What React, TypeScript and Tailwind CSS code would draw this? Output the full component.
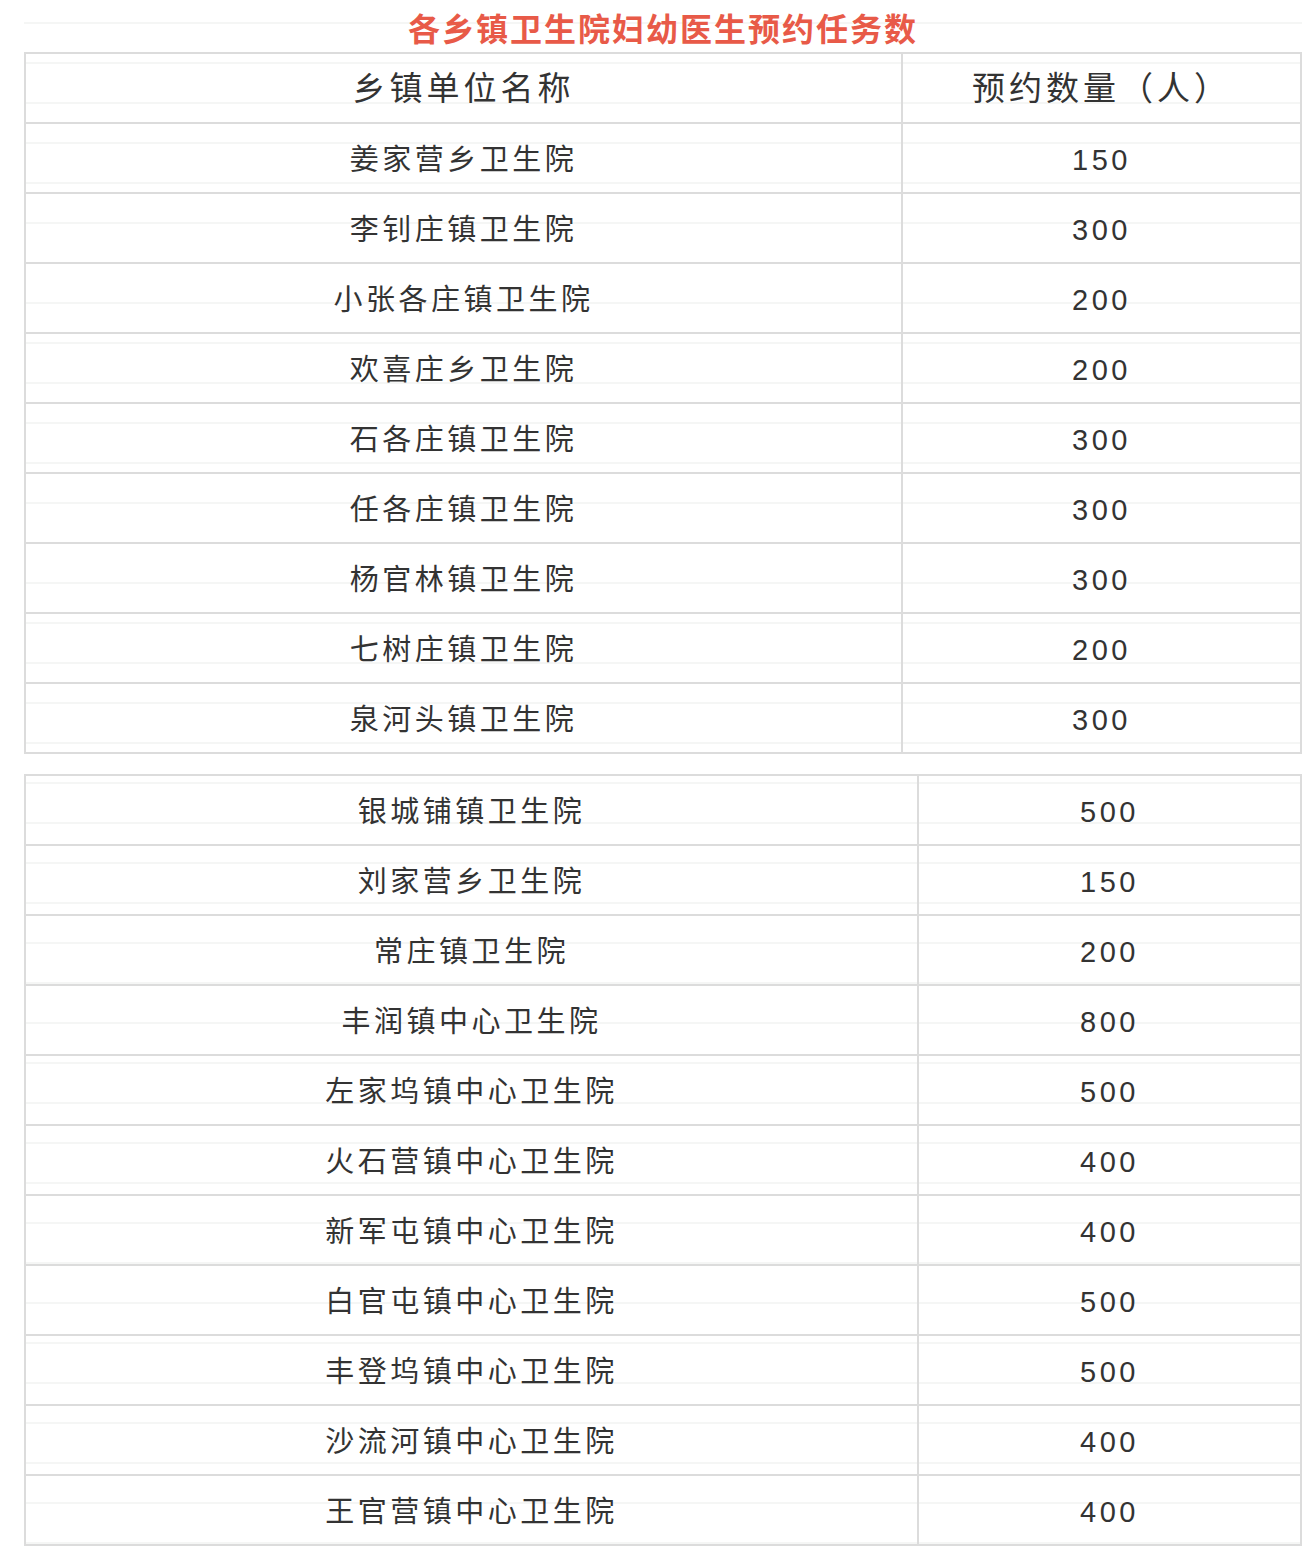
import React from "react";

type Row = [string, string];

const table1: Row[] = [
  ["姜家营乡卫生院", "150"],
  ["李钊庄镇卫生院", "300"],
  ["小张各庄镇卫生院", "200"],
  ["欢喜庄乡卫生院", "200"],
  ["石各庄镇卫生院", "300"],
  ["任各庄镇卫生院", "300"],
  ["杨官林镇卫生院", "300"],
  ["七树庄镇卫生院", "200"],
  ["泉河头镇卫生院", "300"],
];

const table2: Row[] = [
  ["银城铺镇卫生院", "500"],
  ["刘家营乡卫生院", "150"],
  ["常庄镇卫生院", "200"],
  ["丰润镇中心卫生院", "800"],
  ["左家坞镇中心卫生院", "500"],
  ["火石营镇中心卫生院", "400"],
  ["新军屯镇中心卫生院", "400"],
  ["白官屯镇中心卫生院", "500"],
  ["丰登坞镇中心卫生院", "500"],
  ["沙流河镇中心卫生院", "400"],
  ["王官营镇中心卫生院", "400"],
];

const lines =
  "bg-fixed bg-[image:repeating-linear-gradient(to_bottom,transparent_0px,transparent_22px,#f5f6f5_22px,#f5f6f5_24px,transparent_24px,transparent_40px)]";

function DataTable({
  rows,
  header,
  firstCol,
}: {
  rows: Row[];
  header?: Row;
  firstCol: string;
}) {
  const all: { r: Row; head: boolean }[] = [];
  if (header) all.push({ r: header, head: true });
  rows.forEach((r) => all.push({ r, head: false }));
  return (
    <div className={`border-2 border-[#dcdcdc] ${lines}`}>
      {all.map(({ r, head }, i) => {
        const txt = head
          ? "text-[33px] tracking-[4px] pt-[2px]"
          : "text-[29px] tracking-[3.5px] pt-[6px]";
        return (
          <div
            key={i}
            className={`flex ${i === 0 ? "h-[68px]" : "h-[70px] border-t-2 border-[#dcdcdc]"}`}
          >
            <div className={`${firstCol} shrink-0 flex items-center justify-center ${txt}`}>
              {r[0]}
            </div>
            <div
              className={`flex-1 border-l-2 border-[#dcdcdc] flex items-center justify-center ${txt}`}
            >
              {r[1]}
            </div>
          </div>
        );
      })}
    </div>
  );
}

export default function App() {
  return (
    <div
      className="bg-white min-h-[1556px] pl-[24px] pr-[4px] text-[#333333]"
      style={{ fontFamily: '"Liberation Sans", "Noto Sans CJK SC", sans-serif' }}
    >
      <div
        className={`h-[52px] flex items-center justify-center ${lines} text-[#e85a48] font-bold text-[32px] tracking-[2px] pt-[2px]`}
        style={{ fontFamily: '"Noto Sans CJK SC", sans-serif' }}
      >
        各乡镇卫生院妇幼医生预约任务数
      </div>
      <DataTable
        header={["乡镇单位名称", "预约数量（人）"]}
        rows={table1}
        firstCol="w-[875px]"
      />
      <div className="h-[20px]" />
      <DataTable rows={table2} firstCol="w-[891px]" />
    </div>
  );
}
